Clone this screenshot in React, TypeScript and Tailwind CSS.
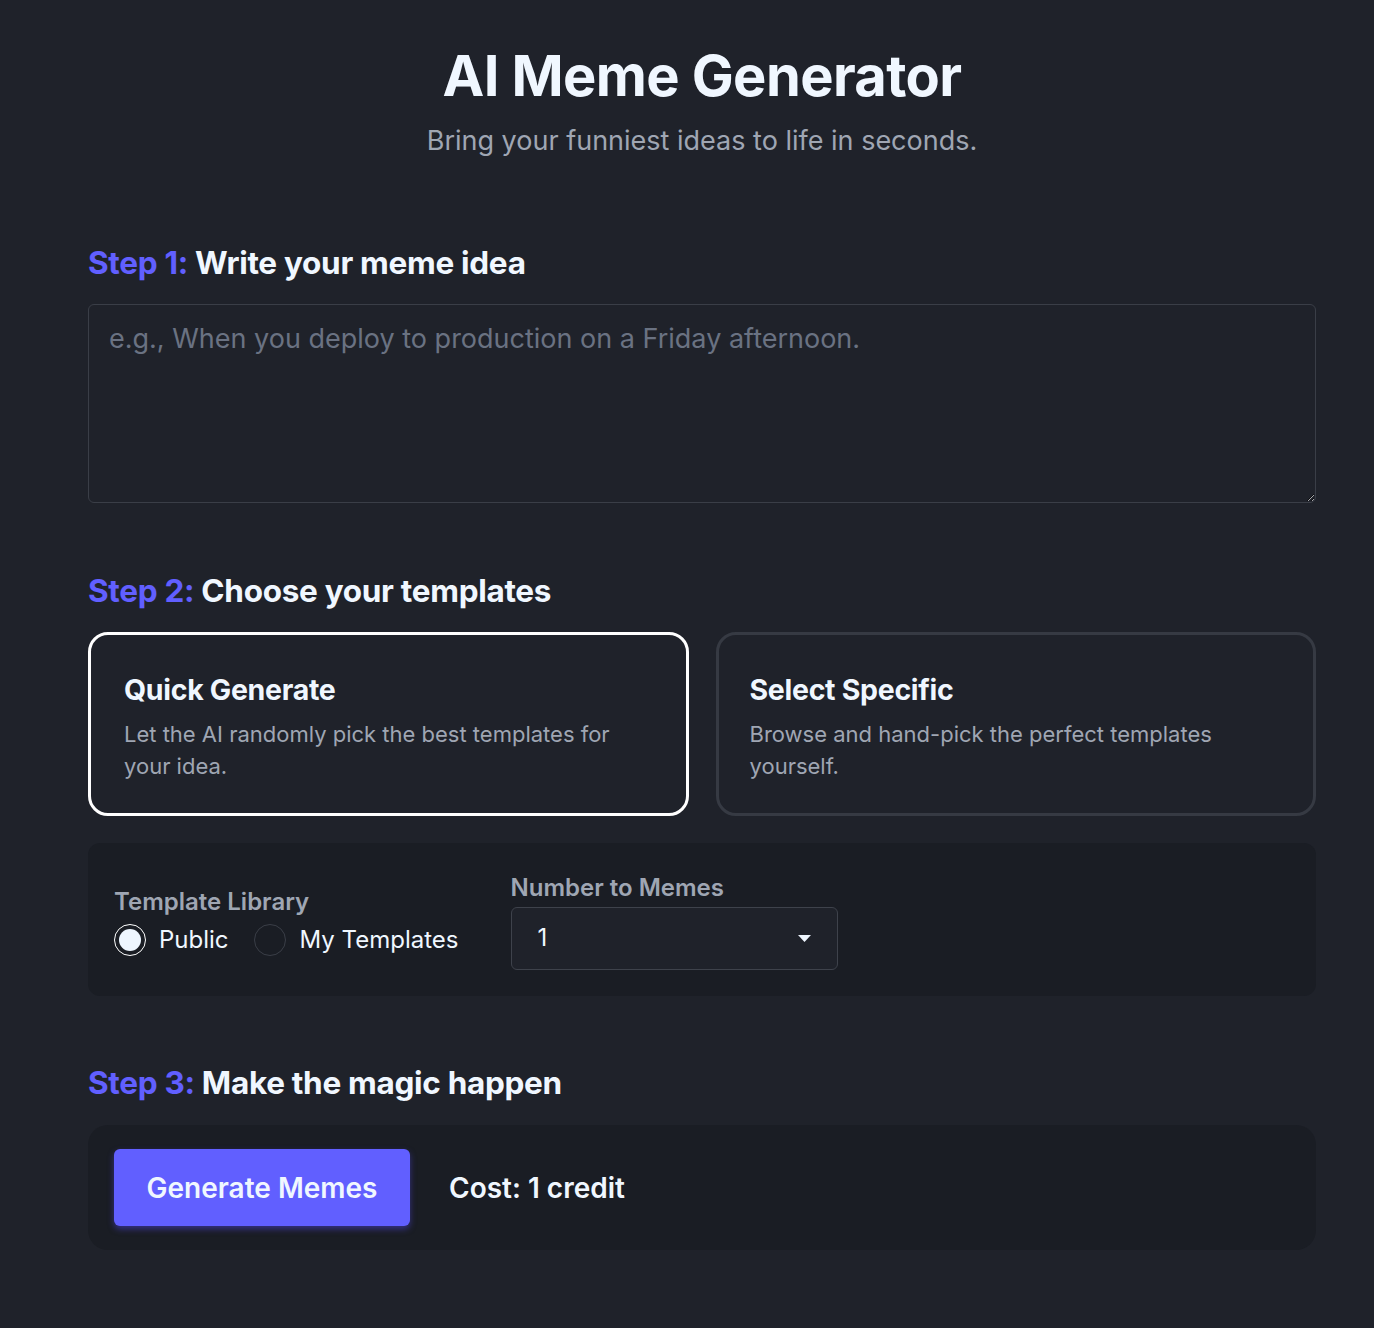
import React from "react";

export default function App() {
    const [mode, setMode] = React.useState<"quick" | "specific">("quick");
    const [library, setLibrary] = React.useState<"public" | "mine">("public");

    return (
        <div className="min-h-screen bg-[#1f222a] font-['Inter','Noto_Sans',sans-serif] text-[#f0f7ff]">
            <div className="ml-[88px] w-[1228px] pt-[44px] pb-[40px]">
                {/* Header */}
                <header className="text-center">
                    <h1 className="text-[56px] font-bold leading-[64px] tracking-[-0.6px]">AI Meme Generator</h1>
                    <p className="mt-[15px] text-[27px] leading-[36px] text-[#9fa6b3]">
                        Bring your funniest ideas to life in seconds.
                    </p>
                </header>

                {/* Step 1 */}
                <section className="mt-[86px]">
                    <h2 className="text-[31.5px] font-bold leading-[36px] tracking-[-0.3px]">
                        <span className="text-indigo-500">Step 1:</span> Write your meme idea
                    </h2>
                    <textarea
                        className="mt-[23px] block h-[199px] w-full rounded-md border border-[#3a3e47] bg-transparent px-5 py-4 text-[27px] leading-[36px] text-[#f0f7ff] outline-none placeholder:text-gray-500"
                        placeholder="e.g., When you deploy to production on a Friday afternoon."
                    />
                </section>

                {/* Step 2 */}
                <section className="mt-[70px]">
                    <h2 className="text-[31.5px] font-bold leading-[36px] tracking-[-0.3px]">
                        <span className="text-indigo-500">Step 2:</span> Choose your templates
                    </h2>
                    <div className="mt-[23px] grid grid-cols-2 gap-[27px]">
                        <div
                            onClick={() => setMode("quick")}
                            className={`h-[184px] cursor-pointer rounded-[20px] border-[3px] pl-[33px] pr-[64px] pt-[37px] ${mode === "quick" ? "border-white" : "border-[#363a43]"}`}
                        >
                            <div className="text-[28.5px] font-bold leading-[36px] tracking-[-0.3px]">Quick Generate</div>
                            <div className="mt-[10px] text-[22px] leading-[32px] text-[#9fa6b3]">
                                Let the AI randomly pick the best templates for your idea.
                            </div>
                        </div>
                        <div
                            onClick={() => setMode("specific")}
                            className={`h-[184px] cursor-pointer rounded-[20px] border-[3px] pl-[31px] pr-[64px] pt-[37px] ${mode === "specific" ? "border-white" : "border-[#363a43]"}`}
                        >
                            <div className="text-[28.5px] font-bold leading-[36px] tracking-[-0.3px]">Select Specific</div>
                            <div className="mt-[10px] text-[22px] leading-[32px] text-[#9fa6b3]">
                                Browse and hand-pick the perfect templates yourself.
                            </div>
                        </div>
                    </div>

                    <div className="mt-[27px] flex h-[153px] items-center gap-[52px] rounded-xl bg-[#1a1d24] px-[26px] pt-[4px]">
                        <div>
                            <div className="text-[24px] font-semibold leading-[28px] text-[#9fa6b3]">Template Library</div>
                            <div className="mt-2 flex h-8 items-center text-[24px]">
                                <button onClick={() => setLibrary("public")} className="flex items-center gap-[13px]">
                                    <span
                                        className={`flex h-8 w-8 items-center justify-center rounded-full border ${library === "public" ? "border-white" : "border-[#3a3e47]"}`}
                                    >
                                        {library === "public" && <span className="h-[22px] w-[22px] rounded-full bg-[#eef6ff]" />}
                                    </span>
                                    Public
                                </button>
                                <button onClick={() => setLibrary("mine")} className="ml-[25px] flex items-center gap-[14px]">
                                    <span
                                        className={`flex h-8 w-8 items-center justify-center rounded-full border ${library === "mine" ? "border-white" : "border-[#3a3e47]"}`}
                                    >
                                        {library === "mine" && <span className="h-[22px] w-[22px] rounded-full bg-[#eef6ff]" />}
                                    </span>
                                    My Templates
                                </button>
                            </div>
                        </div>
                        <div>
                            <div className="text-[24px] font-semibold leading-[28px] text-[#9fa6b3]">Number to Memes</div>
                            <div className="mt-[5px] flex h-[63px] w-[327px] items-center justify-between rounded-md border border-[#3e424b] bg-[#1f222a] pl-[26px] pr-[26px] text-[24px]">
                                <span>1</span>
                                <svg width="13" height="7" viewBox="0 0 13 7" className="fill-[#eef6ff]">
                                    <path d="M0 0h13L6.5 7z" />
                                </svg>
                            </div>
                        </div>
                    </div>
                </section>

                {/* Step 3 */}
                <section className="mt-[69px]">
                    <h2 className="text-[31.5px] font-bold leading-[36px] tracking-[-0.3px]">
                        <span className="text-indigo-500">Step 3:</span> Make the magic happen
                    </h2>
                    <div className="mt-[24px] flex h-[125px] items-center gap-[39px] rounded-[20px] bg-[#1a1d24] px-[26px]">
                        <button className="h-[77px] w-[296px] rounded-md bg-indigo-500 text-[28px] font-semibold text-[#f0f7ff] shadow-[0_3px_6px_rgba(79,70,229,0.5)]">
                            Generate Memes
                        </button>
                        <span className="text-[28px] font-semibold">Cost: 1 credit</span>
                    </div>
                </section>
            </div>
        </div>
    );
}
